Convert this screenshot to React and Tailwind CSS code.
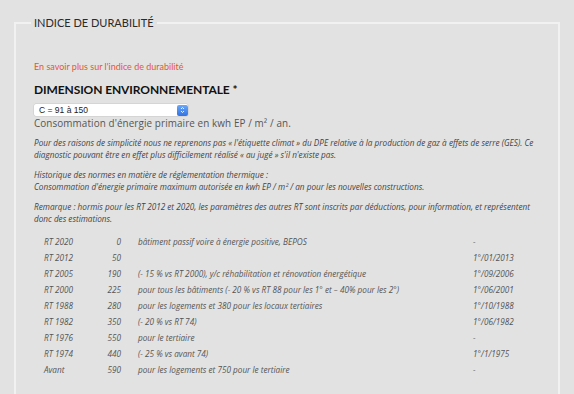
import React from "react";

const rows = [
  ["RT 2020", "0", "bâtiment passif voire à énergie positive, BEPOS", "-"],
  ["RT 2012", "50", "", "1°/01/2013"],
  ["RT 2005", "190", "(- 15 % vs RT 2000), y/c réhabilitation et rénovation énergétique", "1°/09/2006"],
  ["RT 2000", "225", "pour tous les bâtiments (- 20 % vs RT 88 pour les 1° et – 40% pour les 2°)", "1°/06/2001"],
  ["RT 1988", "280", "pour les logements et 380 pour les locaux tertiaires", "1°/10/1988"],
  ["RT 1982", "350", "(- 20 % vs RT 74)", "1°/06/1982"],
  ["RT 1976", "550", "pour le tertiaire", "-"],
  ["RT 1974", "440", "(- 25 % vs avant 74)", "1°/1/1975"],
  ["Avant", "590", "pour les logements et 750 pour le tertiaire", "-"],
];

export default function App() {
  return (
    <div className="w-[574px] h-[394px] overflow-hidden bg-[#e2e2e2] pt-[15px] pl-[14px]">
      <fieldset className="w-[546px] h-[420px] border-2 border-[#f1f1f1] pl-[18px] pr-[10px]">
        <legend className="-ml-[3px] px-[3px] text-[11px] leading-[16px] text-[#2a2a2a] font-['Lato',sans-serif] font-normal">
          INDICE DE DURABILITÉ
        </legend>
        <div className="mt-[30px] text-[9px] leading-[12px] text-[#e5553a] font-['Lato',sans-serif]">
          En savoir plus sur l'indice de durabilité
        </div>
        <div className="mt-[9px] text-[12px] leading-[16px] font-bold text-[#111] font-['Lato',sans-serif] tracking-[-0.1px]">
          DIMENSION ENVIRONNEMENTALE *
        </div>
        <div className="mt-[6px] w-[154px] h-[12px] bg-white flex items-center justify-between rounded-[2px] shadow-[0_0_0_0.5px_#c8c8c8]">
          <span className="pl-[5px] text-[8.5px] leading-[12px] text-[#222] font-['Liberation_Sans',sans-serif]">C = 91 à 150</span>
          <span className="w-[11px] h-[11px] mr-[0.5px] rounded-[2px] bg-[#3b82f6] bg-gradient-to-b from-[#6aa8f7] to-[#2f72e6] flex items-center justify-center">
            <svg width="5" height="8" viewBox="0 0 5 8">
              <path d="M1 3 L2.5 1.5 L4 3 M1 5 L2.5 6.5 L4 5" stroke="white" strokeWidth="0.9" fill="none" />
            </svg>
          </span>
        </div>
        <div className="mt-[1px] text-[9.9px] leading-[12px] text-[#555] font-['Open_Sans',sans-serif] tracking-[0.1px]">
          Consommation d'énergie primaire en kwh EP / m² / an.
        </div>
        <div className="italic text-[8.2px] leading-[12px] text-[#444] font-['Open_Sans',sans-serif]">
          <p className="mt-[8px]">
            Pour des raisons de simplicité nous ne reprenons pas « l'étiquette climat » du DPE relative à la production de gaz à effets de serre (GES). Ce diagnostic pouvant être en effet plus difficilement réalisé « au jugé » s'il n'existe pas.
          </p>
          <p className="mt-[8px]">
            Historique des normes en matière de réglementation thermique :<br />
            Consommation d'énergie primaire maximum autorisée en kwh EP / m² / an pour les nouvelles constructions.
          </p>
          <p className="mt-[8px]">
            Remarque : hormis pour les RT 2012 et 2020, les paramètres des autres RT sont inscrits par déductions, pour information, et représentent donc des estimations.
          </p>
          <div className="mt-[9px] ml-[10px] grid grid-cols-[50px_27px_352px_1fr] text-[#555]">
            {rows.map((r, i) => (
              <React.Fragment key={i}>
                <div className="h-[16px] leading-[16px]">{r[0]}</div>
                <div className="h-[16px] leading-[16px] text-right">{r[1]}</div>
                <div className="h-[16px] leading-[16px] pl-[17px]">{r[2]}</div>
                <div className="h-[16px] leading-[16px]">{r[3]}</div>
              </React.Fragment>
            ))}
          </div>
        </div>
      </fieldset>
    </div>
  );
}
